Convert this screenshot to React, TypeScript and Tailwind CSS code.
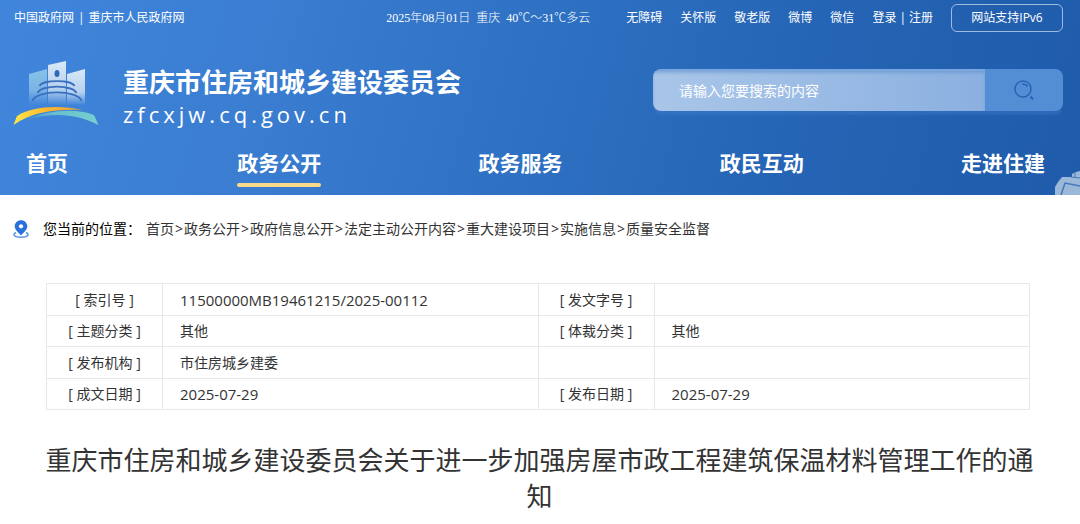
const topLinks = ["无障碍", "关怀版", "敬老版", "微博", "微信"];

const navItems = ["首页", "政务公开", "政务服务", "政民互动", "走进住建"];

const crumbs = [
  "首页",
  "政务公开",
  "政府信息公开",
  "法定主动公开内容",
  "重大建设项目",
  "实施信息",
  "质量安全监督",
];

const rows = [
  ["[ 索引号 ]", "11500000MB19461215/2025-00112", "[ 发文字号 ]", ""],
  ["[ 主题分类 ]", "其他", "[ 体裁分类 ]", "其他"],
  ["[ 发布机构 ]", "市住房城乡建委", "", ""],
  ["[ 成文日期 ]", "2025-07-29", "[ 发布日期 ]", "2025-07-29"],
];

function Logo() {
  return (
    <svg viewBox="13 10 88 67" className="h-[67px] w-[88px] shrink-0" aria-hidden="true">
      <defs>
        <linearGradient id="side" x1="0" y1="0" x2="0" y2="1">
          <stop offset="0" stopColor="#86c3e6" />
          <stop offset="0.6" stopColor="#7ab2e5" />
          <stop offset="1" stopColor="#3f84d9" />
        </linearGradient>
        <linearGradient id="tower" x1="0" y1="0" x2="0" y2="1">
          <stop offset="0" stopColor="#dbe9f7" />
          <stop offset="0.65" stopColor="#b4d0ef" />
          <stop offset="1" stopColor="#4185d9" />
        </linearGradient>
        <linearGradient id="road" x1="0" y1="0" x2="1" y2="0">
          <stop offset="0" stopColor="#ffe64a" />
          <stop offset="0.5" stopColor="#fbb62c" />
          <stop offset="1" stopColor="#e0a044" />
        </linearGradient>
        <linearGradient id="river" x1="0" y1="0" x2="1" y2="0">
          <stop offset="0" stopColor="#4b9bd6" />
          <stop offset="0.4" stopColor="#68c0cf" />
          <stop offset="1" stopColor="#77cfd0" />
        </linearGradient>
      </defs>
      <path d="M29 24 L47 19 V55 H29 Z" fill="url(#side)" />
      <path d="M48 15 L66 11 V55 H48 Z" fill="url(#tower)" />
      <path d="M67 24 L85 19 V55 H67 Z" fill="url(#tower)" />
      <ellipse cx="57" cy="23.500" rx="2.500" ry="3.500" fill="#2f69b5" />
      <g fill="none" stroke="#3a70bd" strokeWidth="1.900">
        <path d="M39.500 36 C42 29.500 72 29.500 74.500 36" />
        <path d="M37.500 43 C41 34.500 73 34.500 76.500 43" />
        <path d="M32.500 51 C35 39.500 79 39.500 81.500 51" />
      </g>
      <path d="M13.500 75 L17 66 C32 56 60 55 83 60 C55 59 32 62 13.500 75 Z" fill="url(#road)" />
      <path d="M28 69 C48 60 76 58 94 65 L98.500 75 C78 64 55 62 28 69 Z" fill="url(#river)" />
    </svg>
  );
}

function SearchIcon() {
  return (
    <svg viewBox="0 0 20 20" className="size-5" fill="none" stroke="#2564b4" strokeWidth="1.500" aria-hidden="true">
      <circle cx="9" cy="9" r="8" />
      <path d="M8.500 4 C11 4 12.500 5 13.500 6.500" />
      <path d="M16.500 16.500 L19 19.500" strokeWidth="2" />
    </svg>
  );
}

function PinIcon() {
  return (
    <svg viewBox="0 0 16 18" className="h-[18px] w-4" aria-hidden="true">
      <path d="M3 12.500 C-1.500 15 2 17.200 8 17.200 C14 17.200 17.500 15 13 12.500" fill="none" stroke="#5c93e3" strokeWidth="1.500" />
      <path
        d="M8 0.300 C4.500 0.300 1.700 3 1.700 6.300 C1.700 10 5.500 12.500 8 15.500 C10.500 12.500 14.300 10 14.300 6.300 C14.300 3 11.500 0.300 8 0.300 Z"
        fill="#2871dd"
      />
      <circle cx="8" cy="6.300" r="2.100" fill="#fff" />
    </svg>
  );
}

// Codes and dates are set a little larger than the Chinese values
function ValueCell({ value }: { value: string }) {
  const numeric = /^\d/.test(value);
  return (
    <td className={`border border-[#e8e8e8] pl-[17px] ${numeric ? "text-[15px] leading-5" : ""}`}>
      {value}
    </td>
  );
}

export default function App() {
  return (
    <div className="bg-white font-['Open_Sans','Noto_Sans_CJK_SC',sans-serif] text-[#333]">
      <header className="relative overflow-hidden bg-linear-[105deg,#4086dc_0%,#3a7dd1_25%,#2e70c2_50%,#2564b4_75%,#1f5baa_100%] text-white">
        {/* Top bar */}
        <div className="flex items-center justify-between pt-1 pr-[17px] pl-[14px] text-xs">
          <div className="flex items-center gap-1">
            <a href="#">中国政府网</a>
            <span>|</span>
            <a href="#">重庆市人民政府网</a>
          </div>
          <div className="flex items-center">
            <p className="mr-9 font-['Liberation_Serif','Noto_Sans_CJK_SC',serif] font-light whitespace-pre">
              2025年08月01日  重庆  40℃～31℃多云
            </p>
            <div className="flex items-center gap-[18px]">
              {topLinks.map((t) => (
                <a key={t} href="#">
                  {t}
                </a>
              ))}
              <div className="flex items-center gap-[3px]">
                <a href="#">登录</a>
                <span>|</span>
                <a href="#">注册</a>
              </div>
              <a
                href="#"
                className="flex h-7 w-28 items-center justify-center rounded-md border border-[#9dbbe0]"
              >
                网站支持IPv6
              </a>
            </div>
          </div>
        </div>

        {/* Logo and search */}
        <div className="mt-7 flex items-start justify-between pr-[17px] pl-[13px]">
          <div className="flex items-start gap-[22px]">
            <Logo />
            <div className="pt-1">
              <p className="text-[26px] leading-9 font-bold">重庆市住房和城乡建设委员会</p>
              <p className="text-[22px] leading-7 tracking-[4px]">zfcxjw.cq.gov.cn</p>
            </div>
          </div>
          <form
            className="mt-[9px] flex h-[42px] w-[410px] overflow-hidden rounded-lg shadow-[0_5px_2px_-1px_rgba(70,130,205,0.35)]"
            onSubmit={(e) => e.preventDefault()}
          >
            <input
              type="text"
              aria-label="搜索"
              placeholder="请输入您要搜索的内容"
              className="min-w-0 flex-1 border-t-2 border-[#7ba7dd] bg-linear-to-r from-[#a9c6e8] to-[#8bb0e0] pl-[26px] text-sm text-white shadow-[inset_0_2px_3px_rgba(80,135,205,0.45)] outline-none placeholder:text-white"
            />
            <button
              type="submit"
              aria-label="搜索"
              className="flex w-[78px] items-center justify-center bg-[#538ed5]"
            >
              <SearchIcon />
            </button>
          </form>
        </div>

        {/* Main nav */}
        <nav className="mt-[19px] flex justify-between pr-[35px] pb-2 pl-[26px] text-[21px] leading-8 font-bold">
          {navItems.map((item, i) => (
            <a key={item} href="#" className={i === 0 ? "mr-3" : ""}>
              {item}
              <span className={`mt-1 block h-1 rounded-full ${i === 1 ? "bg-[#fbd989]" : ""}`} />
            </a>
          ))}
        </nav>

        {/* Robot peeking in from the corner */}
        <svg viewBox="0 0 26 26" className="absolute right-0 bottom-0 size-[26px]" aria-hidden="true">
          <path d="M1 26 V18 L4 13 L8 8 L18 8 V5 L22 3 L26 2 V26 Z" fill="#9bb8d9" />
          <path d="M7 26 L11 14 L26 17" fill="none" stroke="#4378bb" strokeWidth="1.500" />
          <path d="M17 8 L26 9 M21 3 V8" fill="none" stroke="#4378bb" />
        </svg>
      </header>

      {/* Breadcrumb */}
      <div className="mt-6 flex items-center pl-[13px] text-sm">
        <PinIcon />
        <span className="ml-[14px] text-black">您当前的位置：</span>
        <nav className="ml-[5px]">
          {crumbs.map((c, i) => (
            <span key={c}>
              {i > 0 && <span className="mx-px">&gt;</span>}
              <a href="#">{c}</a>
            </span>
          ))}
        </nav>
      </div>

      {/* Document info */}
      <div className="mt-[44px] pr-[50px] pl-[46px]">
        <table className="w-full table-fixed border-collapse text-sm">
          <colgroup>
            <col className="w-[116px]" />
            <col />
            <col className="w-[116px]" />
            <col />
          </colgroup>
          <tbody>
            {rows.map((r) => (
              <tr key={r[0]} className="odd:h-8 even:h-[31px]">
                <th scope="row" className="border border-[#e8e8e8] font-normal">{r[0]}</th>
                <ValueCell value={r[1]} />
                <th scope="row" className="border border-[#e8e8e8] font-normal">{r[2]}</th>
                <ValueCell value={r[3]} />
              </tr>
            ))}
          </tbody>
        </table>
      </div>

      <h1 className="mt-8 pr-[37px] pl-9 text-center text-[26px] leading-9">
        重庆市住房和城乡建设委员会关于进一步加强房屋市政工程建筑保温材料管理工作的通知
      </h1>
    </div>
  );
}
